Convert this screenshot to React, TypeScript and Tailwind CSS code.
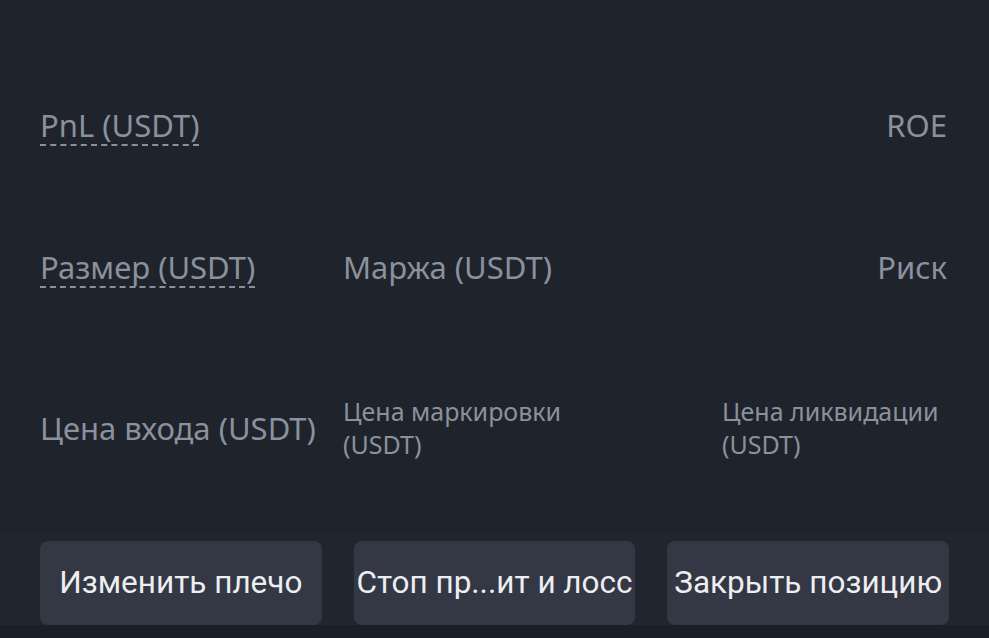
import type { ReactNode } from 'react';

function Label({ children, dashed, className = '' }: { children: ReactNode; dashed?: boolean; className?: string }) {
  return (
    <span
      className={`text-[#8b919c] ${dashed ? 'underline decoration-dashed decoration-[#8b919c] decoration-2 underline-offset-[8px]' : ''} ${className}`}
    >
      {children}
    </span>
  );
}

function ActionButton({ children }: { children: ReactNode }) {
  return (
    <button className="flex-1 h-[84px] rounded-lg bg-[#333844] text-[#eceef1] text-[31.5px] font-['Roboto',sans-serif] whitespace-nowrap overflow-hidden">
      {children}
    </button>
  );
}

export default function App() {
  return (
    <div className="w-[989px] h-[638px] bg-[#1f232c] font-['Noto_Sans','Open_Sans',sans-serif] flex flex-col overflow-hidden">
      <div className="h-[92px]" />

      <div className="flex justify-between items-center px-10 h-[66px] text-[31px]">
        <Label dashed>PnL (USDT)</Label>
        <Label className="mr-[2px]">ROE</Label>
      </div>

      <div className="h-[76px]" />

      <div className="flex items-center px-10 h-[66px] text-[31px]">
        <div className="w-[303px]">
          <Label dashed>Размер (USDT)</Label>
        </div>
        <div className="flex-1">
          <Label>Маржа (USDT)</Label>
        </div>
        <Label className="mr-[2px]">Риск</Label>
      </div>

      <div className="h-[86px]" />

      <div className="flex items-center px-10 h-[84px]">
        <div className="w-[303px] text-[31px] whitespace-nowrap">
          <Label>Цена входа (USDT)</Label>
        </div>
        <div className="w-[379px] text-[25px] leading-[33px]">
          <Label>
            Цена маркировки
            <br />
            (USDT)
          </Label>
        </div>
        <div className="flex-1 text-[25px] leading-[33px]">
          <Label>
            Цена ликвидации
            <br />
            (USDT)
          </Label>
        </div>
      </div>

      <div className="h-[64px]" />

      <div className="flex gap-8 px-10 pt-[7px] bg-[#21252e]">
        <ActionButton>Изменить плечо</ActionButton>
        <ActionButton>Стоп пр...ит и лосс</ActionButton>
        <ActionButton>Закрыть позицию</ActionButton>
      </div>

      <div className="flex-1 bg-[#1b1f27]" />
    </div>
  );
}
